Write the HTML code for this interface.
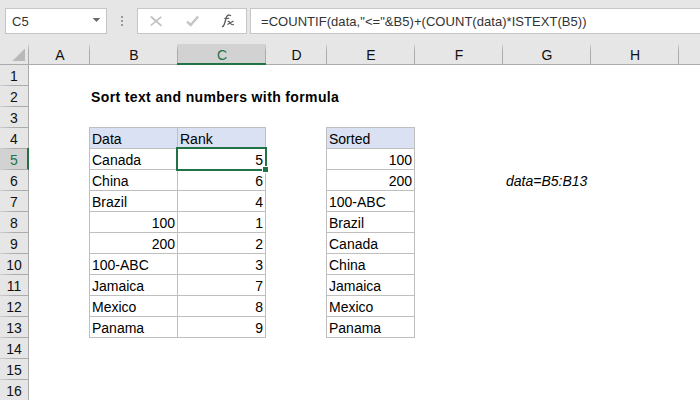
<!DOCTYPE html><html><head><meta charset="utf-8"><style>
*{margin:0;padding:0;box-sizing:border-box}
html,body{width:700px;height:400px;overflow:hidden;background:#fff;font-family:"Liberation Sans",sans-serif}
.a{position:absolute}
.t{position:absolute;white-space:nowrap;line-height:1}
</style></head><body>
<div class="a" style="left:0;top:0;width:700px;height:64px;background:#e6e6e6"></div>
<div class="a" style="left:5px;top:8px;width:102px;height:26px;background:#fff;border:1px solid #c6c6c6"></div>
<div class="t" style="left:12px;top:15px;font-size:13px;color:#333">C5</div>
<svg class="a" style="left:88px;top:14px" width="16" height="12"><path d="M4.6 3.9L12.3 3.9L8.45 8.1Z" fill="#6a6a6a"/></svg>
<div class="a" style="left:121px;top:16px;width:2px;height:2px;background:#9a9a9a"></div>
<div class="a" style="left:121px;top:20px;width:2px;height:2px;background:#9a9a9a"></div>
<div class="a" style="left:121px;top:24px;width:2px;height:2px;background:#9a9a9a"></div>
<div class="a" style="left:137px;top:8px;width:110px;height:26px;background:#fff;border:1px solid #c6c6c6"></div>
<svg class="a" style="left:146px;top:12px" width="20" height="18"><path d="M5.4 5L14.9 13.4" stroke="#c2c2c2" stroke-width="1.9" stroke-linecap="round"/><path d="M14.9 5.2L5.2 13.1" stroke="#c2c2c2" stroke-width="1.5" stroke-linecap="round"/></svg>
<svg class="a" style="left:184px;top:14px" width="16" height="14"><path d="M3 7.7L6.7 11L14.1 2.5" stroke="#c4c4c4" stroke-width="2.4" fill="none"/></svg>
<svg class="a" style="left:218px;top:12px" width="20" height="18"><path d="M4 14.6Q5.6 14.8 6.4 12L8.4 5.2Q9.3 2.6 11.4 3.1Q12.6 3.3 12.8 4" stroke="#5a5a5a" stroke-width="1.3" fill="none"/><path d="M6.3 6.4L11.2 6.4" stroke="#5a5a5a" stroke-width="1.1"/><path d="M9.6 9.6Q10.8 8.9 11.6 10.2L13.2 12.2Q14.2 13.2 15.8 12.2M15.6 9L9.4 12.6" stroke="#5a5a5a" stroke-width="1.1" fill="none"/></svg>
<div class="a" style="left:250px;top:8px;width:460px;height:26px;background:#fff;border:1px solid #c6c6c6"></div>
<div class="t" style="left:261px;top:15px;font-size:13px;letter-spacing:0.045px;color:#333">=COUNTIF(data,"&lt;="&amp;B5)+(COUNT(data)*ISTEXT(B5))</div>
<div class="a" style="left:0;top:64px;width:700px;height:1px;background:#ababab"></div>
<div class="t" style="left:30px;top:48px;width:60px;text-align:center;font-size:14px;color:#111">A</div>
<div class="a" style="left:89px;top:44px;width:1px;height:20px;background:linear-gradient(#d6d6d6,#ababab 35%)"></div>
<div class="t" style="left:90px;top:48px;width:88px;text-align:center;font-size:14px;color:#111">B</div>
<div class="a" style="left:177px;top:44px;width:89px;height:20px;background:#d2d2d2"></div>
<div class="a" style="left:177px;top:44px;width:1px;height:20px;background:linear-gradient(#d6d6d6,#ababab 35%)"></div>
<div class="t" style="left:178px;top:48px;width:88px;text-align:center;font-size:14px;color:#217346">C</div>
<div class="a" style="left:265px;top:44px;width:1px;height:20px;background:linear-gradient(#d6d6d6,#ababab 35%)"></div>
<div class="t" style="left:266px;top:48px;width:61px;text-align:center;font-size:14px;color:#111">D</div>
<div class="a" style="left:326px;top:44px;width:1px;height:20px;background:linear-gradient(#d6d6d6,#ababab 35%)"></div>
<div class="t" style="left:327px;top:48px;width:88px;text-align:center;font-size:14px;color:#111">E</div>
<div class="a" style="left:414px;top:44px;width:1px;height:20px;background:linear-gradient(#d6d6d6,#ababab 35%)"></div>
<div class="t" style="left:415px;top:48px;width:88px;text-align:center;font-size:14px;color:#111">F</div>
<div class="a" style="left:502px;top:44px;width:1px;height:20px;background:linear-gradient(#d6d6d6,#ababab 35%)"></div>
<div class="t" style="left:503px;top:48px;width:88px;text-align:center;font-size:14px;color:#111">G</div>
<div class="a" style="left:590px;top:44px;width:1px;height:20px;background:linear-gradient(#d6d6d6,#ababab 35%)"></div>
<div class="t" style="left:591px;top:48px;width:88px;text-align:center;font-size:14px;color:#111">H</div>
<div class="a" style="left:678px;top:44px;width:1px;height:20px;background:linear-gradient(#d6d6d6,#ababab 35%)"></div>
<div class="t" style="left:679px;top:48px;width:88px;text-align:center;font-size:14px;color:#111">I</div>
<div class="a" style="left:177px;top:63px;width:89px;height:2px;background:#217346"></div>
<div class="a" style="left:0;top:65px;width:28px;height:335px;background:#e6e6e6"></div>
<div class="a" style="left:28px;top:44px;width:1px;height:20px;background:linear-gradient(#d6d6d6,#ababab 35%)"></div>
<div class="a" style="left:28px;top:64px;width:1px;height:336px;background:#ababab"></div>
<svg class="a" style="left:0;top:44px" width="28" height="20"><path d="M12.4 17L25 17L25 4.4Z" fill="#b9b9b9"/></svg>
<div class="a" style="left:0;top:85px;width:28px;height:1px;background:linear-gradient(to right,#cfcfcf,#ababab 50%)"></div>
<div class="t" style="left:0;top:69px;width:28px;text-align:center;font-size:14px;color:#111">1</div>
<div class="a" style="left:0;top:106px;width:28px;height:1px;background:linear-gradient(to right,#cfcfcf,#ababab 50%)"></div>
<div class="t" style="left:0;top:90px;width:28px;text-align:center;font-size:14px;color:#111">2</div>
<div class="a" style="left:0;top:127px;width:28px;height:1px;background:linear-gradient(to right,#cfcfcf,#ababab 50%)"></div>
<div class="t" style="left:0;top:111px;width:28px;text-align:center;font-size:14px;color:#111">3</div>
<div class="a" style="left:0;top:148px;width:28px;height:1px;background:linear-gradient(to right,#cfcfcf,#ababab 50%)"></div>
<div class="t" style="left:0;top:132px;width:28px;text-align:center;font-size:14px;color:#111">4</div>
<div class="a" style="left:0;top:149px;width:28px;height:21px;background:#d2d2d2"></div>
<div class="a" style="left:27px;top:148px;width:2px;height:22px;background:#217346"></div>
<div class="a" style="left:0;top:169px;width:28px;height:1px;background:linear-gradient(to right,#cfcfcf,#ababab 50%)"></div>
<div class="t" style="left:0;top:153px;width:28px;text-align:center;font-size:14px;color:#217346">5</div>
<div class="a" style="left:0;top:190px;width:28px;height:1px;background:linear-gradient(to right,#cfcfcf,#ababab 50%)"></div>
<div class="t" style="left:0;top:174px;width:28px;text-align:center;font-size:14px;color:#111">6</div>
<div class="a" style="left:0;top:211px;width:28px;height:1px;background:linear-gradient(to right,#cfcfcf,#ababab 50%)"></div>
<div class="t" style="left:0;top:195px;width:28px;text-align:center;font-size:14px;color:#111">7</div>
<div class="a" style="left:0;top:232px;width:28px;height:1px;background:linear-gradient(to right,#cfcfcf,#ababab 50%)"></div>
<div class="t" style="left:0;top:216px;width:28px;text-align:center;font-size:14px;color:#111">8</div>
<div class="a" style="left:0;top:253px;width:28px;height:1px;background:linear-gradient(to right,#cfcfcf,#ababab 50%)"></div>
<div class="t" style="left:0;top:237px;width:28px;text-align:center;font-size:14px;color:#111">9</div>
<div class="a" style="left:0;top:274px;width:28px;height:1px;background:linear-gradient(to right,#cfcfcf,#ababab 50%)"></div>
<div class="t" style="left:0;top:258px;width:28px;text-align:center;font-size:14px;color:#111">10</div>
<div class="a" style="left:0;top:295px;width:28px;height:1px;background:linear-gradient(to right,#cfcfcf,#ababab 50%)"></div>
<div class="t" style="left:0;top:279px;width:28px;text-align:center;font-size:14px;color:#111">11</div>
<div class="a" style="left:0;top:316px;width:28px;height:1px;background:linear-gradient(to right,#cfcfcf,#ababab 50%)"></div>
<div class="t" style="left:0;top:300px;width:28px;text-align:center;font-size:14px;color:#111">12</div>
<div class="a" style="left:0;top:337px;width:28px;height:1px;background:linear-gradient(to right,#cfcfcf,#ababab 50%)"></div>
<div class="t" style="left:0;top:321px;width:28px;text-align:center;font-size:14px;color:#111">13</div>
<div class="a" style="left:0;top:358px;width:28px;height:1px;background:linear-gradient(to right,#cfcfcf,#ababab 50%)"></div>
<div class="t" style="left:0;top:342px;width:28px;text-align:center;font-size:14px;color:#111">14</div>
<div class="a" style="left:0;top:379px;width:28px;height:1px;background:linear-gradient(to right,#cfcfcf,#ababab 50%)"></div>
<div class="t" style="left:0;top:363px;width:28px;text-align:center;font-size:14px;color:#111">15</div>
<div class="a" style="left:0;top:400px;width:28px;height:1px;background:linear-gradient(to right,#cfcfcf,#ababab 50%)"></div>
<div class="t" style="left:0;top:384px;width:28px;text-align:center;font-size:14px;color:#111">16</div>

<div class="t" style="left:91px;top:90px;font-size:14px;font-weight:bold;letter-spacing:0.37px;color:#000">Sort text and numbers with formula</div>
<div class="a" style="left:89px;top:127px;width:88px;height:21px;background:#d9e1f2"></div><div class="t" style="left:92px;top:132px;font-size:14px;color:#000">Data</div>
<div class="a" style="left:177px;top:127px;width:88px;height:21px;background:#d9e1f2"></div><div class="t" style="left:180px;top:132px;font-size:14px;color:#000">Rank</div>
<div class="a" style="left:326px;top:127px;width:88px;height:21px;background:#d9e1f2"></div><div class="t" style="left:329px;top:132px;font-size:14px;color:#000">Sorted</div>
<div class="t" style="left:92px;top:153px;font-size:14px;color:#000">Canada</div>
<div class="t" style="left:177px;top:153px;width:86px;text-align:right;font-size:14px;color:#000">5</div>
<div class="t" style="left:326px;top:153px;width:86px;text-align:right;font-size:14px;color:#000">100</div>
<div class="t" style="left:92px;top:174px;font-size:14px;color:#000">China</div>
<div class="t" style="left:177px;top:174px;width:86px;text-align:right;font-size:14px;color:#000">6</div>
<div class="t" style="left:326px;top:174px;width:86px;text-align:right;font-size:14px;color:#000">200</div>
<div class="t" style="left:92px;top:195px;font-size:14px;color:#000">Brazil</div>
<div class="t" style="left:177px;top:195px;width:86px;text-align:right;font-size:14px;color:#000">4</div>
<div class="t" style="left:329px;top:195px;font-size:14px;color:#000">100-ABC</div>
<div class="t" style="left:89px;top:216px;width:86px;text-align:right;font-size:14px;color:#000">100</div>
<div class="t" style="left:177px;top:216px;width:86px;text-align:right;font-size:14px;color:#000">1</div>
<div class="t" style="left:329px;top:216px;font-size:14px;color:#000">Brazil</div>
<div class="t" style="left:89px;top:237px;width:86px;text-align:right;font-size:14px;color:#000">200</div>
<div class="t" style="left:177px;top:237px;width:86px;text-align:right;font-size:14px;color:#000">2</div>
<div class="t" style="left:329px;top:237px;font-size:14px;color:#000">Canada</div>
<div class="t" style="left:92px;top:258px;font-size:14px;color:#000">100-ABC</div>
<div class="t" style="left:177px;top:258px;width:86px;text-align:right;font-size:14px;color:#000">3</div>
<div class="t" style="left:329px;top:258px;font-size:14px;color:#000">China</div>
<div class="t" style="left:92px;top:279px;font-size:14px;color:#000">Jamaica</div>
<div class="t" style="left:177px;top:279px;width:86px;text-align:right;font-size:14px;color:#000">7</div>
<div class="t" style="left:329px;top:279px;font-size:14px;color:#000">Jamaica</div>
<div class="t" style="left:92px;top:300px;font-size:14px;color:#000">Mexico</div>
<div class="t" style="left:177px;top:300px;width:86px;text-align:right;font-size:14px;color:#000">8</div>
<div class="t" style="left:329px;top:300px;font-size:14px;color:#000">Mexico</div>
<div class="t" style="left:92px;top:321px;font-size:14px;color:#000">Panama</div>
<div class="t" style="left:177px;top:321px;width:86px;text-align:right;font-size:14px;color:#000">9</div>
<div class="t" style="left:329px;top:321px;font-size:14px;color:#000">Panama</div>
<div class="a" style="left:89px;top:127px;width:1px;height:211px;background:#bfbfbf"></div><div class="a" style="left:177px;top:127px;width:1px;height:211px;background:#bfbfbf"></div><div class="a" style="left:265px;top:127px;width:1px;height:211px;background:#bfbfbf"></div><div class="a" style="left:89px;top:127px;width:177px;height:1px;background:#bfbfbf"></div><div class="a" style="left:89px;top:148px;width:177px;height:1px;background:#bfbfbf"></div><div class="a" style="left:89px;top:169px;width:177px;height:1px;background:#bfbfbf"></div><div class="a" style="left:89px;top:190px;width:177px;height:1px;background:#bfbfbf"></div><div class="a" style="left:89px;top:211px;width:177px;height:1px;background:#bfbfbf"></div><div class="a" style="left:89px;top:232px;width:177px;height:1px;background:#bfbfbf"></div><div class="a" style="left:89px;top:253px;width:177px;height:1px;background:#bfbfbf"></div><div class="a" style="left:89px;top:274px;width:177px;height:1px;background:#bfbfbf"></div><div class="a" style="left:89px;top:295px;width:177px;height:1px;background:#bfbfbf"></div><div class="a" style="left:89px;top:316px;width:177px;height:1px;background:#bfbfbf"></div><div class="a" style="left:89px;top:337px;width:177px;height:1px;background:#bfbfbf"></div>
<div class="a" style="left:326px;top:127px;width:1px;height:211px;background:#bfbfbf"></div><div class="a" style="left:414px;top:127px;width:1px;height:211px;background:#bfbfbf"></div><div class="a" style="left:326px;top:127px;width:89px;height:1px;background:#bfbfbf"></div><div class="a" style="left:326px;top:148px;width:89px;height:1px;background:#bfbfbf"></div><div class="a" style="left:326px;top:169px;width:89px;height:1px;background:#bfbfbf"></div><div class="a" style="left:326px;top:190px;width:89px;height:1px;background:#bfbfbf"></div><div class="a" style="left:326px;top:211px;width:89px;height:1px;background:#bfbfbf"></div><div class="a" style="left:326px;top:232px;width:89px;height:1px;background:#bfbfbf"></div><div class="a" style="left:326px;top:253px;width:89px;height:1px;background:#bfbfbf"></div><div class="a" style="left:326px;top:274px;width:89px;height:1px;background:#bfbfbf"></div><div class="a" style="left:326px;top:295px;width:89px;height:1px;background:#bfbfbf"></div><div class="a" style="left:326px;top:316px;width:89px;height:1px;background:#bfbfbf"></div><div class="a" style="left:326px;top:337px;width:89px;height:1px;background:#bfbfbf"></div>
<div class="t" style="left:506px;top:174px;font-size:14px;font-style:italic;color:#000">data=B5:B13</div>
<div class="a" style="left:176px;top:147px;width:91px;height:24px;border:2px solid #217346"></div>
<div class="a" style="left:262px;top:166px;width:7px;height:7px;background:#217346;border:1px solid #fff"></div>
</body></html>
